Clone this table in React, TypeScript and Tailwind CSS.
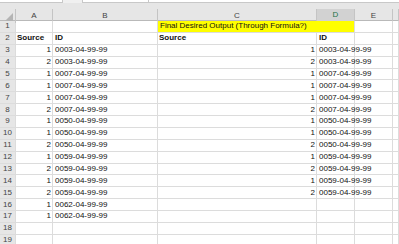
import React from 'react'

const cols = ['A', 'B', 'C', 'D', 'E', '']

const left: [string, string][] = [
    ['1', '0003-04-99-99'],
    ['2', '0003-04-99-99'],
    ['1', '0007-04-99-99'],
    ['1', '0007-04-99-99'],
    ['1', '0007-04-99-99'],
    ['2', '0007-04-99-99'],
    ['1', '0050-04-99-99'],
    ['1', '0050-04-99-99'],
    ['2', '0050-04-99-99'],
    ['1', '0059-04-99-99'],
    ['2', '0059-04-99-99'],
    ['1', '0059-04-99-99'],
    ['2', '0059-04-99-99'],
    ['1', '0062-04-99-99'],
    ['1', '0062-04-99-99'],
]

// desired output only has the first 13 rows
const right = left.slice(0, 13)

const grid = 'grid grid-cols-[16px_37px_105px_159px_38px_38px_1fr]'
const cell = 'h-[11.875px] border-r border-b border-[#dcdcdc] flex items-center overflow-visible whitespace-nowrap'

const App = () => {
    const rows = Array.from({ length: 19 }, (_, i) => i + 1)

    return (
        <div className="w-[399px] h-[244px] overflow-hidden bg-white text-[8px] text-[#111]" style={{ fontFamily: '"Liberation Sans", Arial, sans-serif' }}>
            {/* formula bar remnant */}
            <div className="h-[3px] flex bg-[#f0f0f0]">
                <div className="w-[63px] bg-white border-r border-b border-[#c8c8c8]" />
                <div className="w-[19px]" />
                <div className="w-[67px] bg-white border-l border-r border-b border-[#c8c8c8]" />
                <div className="flex-1 bg-white border-b border-[#c8c8c8]" />
            </div>
            <div className="h-[6px] bg-[#e6e6e6]" />

            {/* column headers */}
            <div className={`${grid} h-[12px] bg-[#e6e6e6] border-b border-[#b9b9b9]`}>
                <div className="relative border-r border-[#c4c4c4]">
                    <div className="absolute right-[2px] bottom-[2px] w-0 h-0 border-l-[8px] border-l-transparent border-b-[8px] border-b-[#b4b4b4]" />
                </div>
                {cols.map((c, i) => (
                    <div
                        key={i}
                        className={
                            c === 'D'
                                ? 'flex items-center justify-center border-r border-[#c4c4c4] bg-[#d2d2d2] text-[#217346] border-b-2 border-b-[#a8c5b3]'
                                : 'flex items-center justify-center border-r border-[#c4c4c4] text-[#444]'
                        }
                    >
                        {c}
                    </div>
                ))}
            </div>

            {/* sheet body */}
            {rows.map((r) => {
                const l = r >= 3 ? left[r - 3] : undefined
                const rt = r >= 3 ? right[r - 3] : undefined
                return (
                    <div key={r} className={grid}>
                        <div className={`${cell} justify-center bg-[#e6e6e6] border-[#c4c4c4] text-[#444]`}>{r}</div>
                        <div className={`${cell} ${r === 2 ? 'pl-[1px] font-bold' : 'justify-end pr-[1px]'}`}>
                            {r === 2 ? 'Source' : l?.[0]}
                        </div>
                        <div className={`${cell} pl-[2px] ${r === 2 ? 'font-bold' : ''}`}>
                            {r === 2 ? 'ID' : l?.[1]}
                        </div>
                        {r === 1 ? (
                            <div className="col-span-2 h-[11.875px] bg-[#ffff00] border-b border-r border-[#dcdcdc] flex items-center pl-[2px] whitespace-nowrap">
                                Final Desired Output (Through Formula?)
                            </div>
                        ) : (
                            <>
                                <div className={`${cell} ${r === 2 ? 'pl-[1px] font-bold' : 'justify-end pr-[1px]'}`}>
                                    {r === 2 ? 'Source' : rt?.[0]}
                                </div>
                                <div className={`${cell} pl-[2px] ${r === 2 ? 'font-bold' : ''}`}>
                                    {r === 2 ? 'ID' : rt?.[1]}
                                </div>
                            </>
                        )}
                        <div className={cell} />
                        <div className={cell} />
                    </div>
                )
            })}
        </div>
    )
}

export default App
